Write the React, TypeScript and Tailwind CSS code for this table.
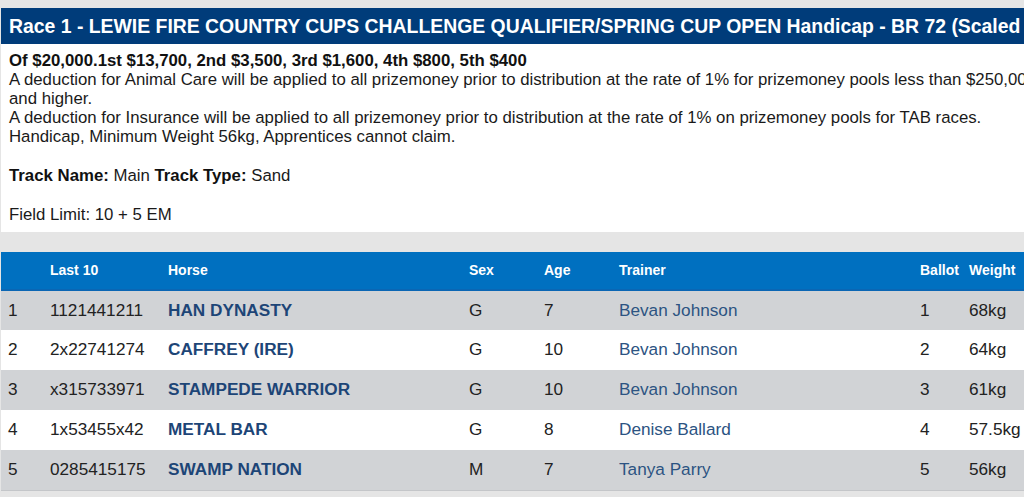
const runners = [
  { no: 1, last10: '1121441211', horse: 'HAN DYNASTY', sex: 'G', age: 7, trainer: 'Bevan Johnson', ballot: 1, weight: '68kg' },
  { no: 2, last10: '2x22741274', horse: 'CAFFREY (IRE)', sex: 'G', age: 10, trainer: 'Bevan Johnson', ballot: 2, weight: '64kg' },
  { no: 3, last10: 'x315733971', horse: 'STAMPEDE WARRIOR', sex: 'G', age: 10, trainer: 'Bevan Johnson', ballot: 3, weight: '61kg' },
  { no: 4, last10: '1x53455x42', horse: 'METAL BAR', sex: 'G', age: 8, trainer: 'Denise Ballard', ballot: 4, weight: '57.5kg' },
  { no: 5, last10: '0285415175', horse: 'SWAMP NATION', sex: 'M', age: 7, trainer: 'Tanya Parry', ballot: 5, weight: '56kg' },
];

export default function App() {
  return (
    <div className="w-[1024px] h-[497px] overflow-hidden bg-[#e5e5e5] pt-2 pl-px font-['Liberation_Sans',Arial,sans-serif]">
      {/* Race title */}
      <div className="h-9 bg-[#003c7a] text-white font-bold text-[19.4px] leading-9 pl-2 whitespace-nowrap overflow-hidden">
        Race 1 - LEWIE FIRE COUNTRY CUPS CHALLENGE QUALIFIER/SPRING CUP OPEN Handicap - BR 72 (Scaled
      </div>

      {/* Conditions */}
      <div className="h-[188px] bg-white pl-2 pt-[7px] text-[16.8px] leading-[19px] text-[#1a1a1a] whitespace-nowrap overflow-hidden">
        <p className="font-bold text-[#111]">Of $20,000.1st $13,700, 2nd $3,500, 3rd $1,600, 4th $800, 5th $400</p>
        <p>A deduction for Animal Care will be applied to all prizemoney prior to distribution at the rate of 1% for prizemoney pools less than $250,00</p>
        <p>and higher.</p>
        <p>A deduction for Insurance will be applied to all prizemoney prior to distribution at the rate of 1% on prizemoney pools for TAB races.</p>
        <p>Handicap, Minimum Weight 56kg, Apprentices cannot claim.</p>
        <p className="mt-[20px]">
          <span className="font-bold text-[#111]">Track Name:</span> Main <span className="font-bold text-[#111]">Track Type:</span> Sand
        </p>
        <p className="mt-[20px]">Field Limit: 10 + 5 EM</p>
      </div>

      {/* Field table */}
      <table className="mt-5 w-[1040px] table-fixed border-collapse text-[17.2px]">
        <colgroup>
          <col className="w-[49px]" />
          <col className="w-[118px]" />
          <col className="w-[301px]" />
          <col className="w-[75px]" />
          <col className="w-[75px]" />
          <col className="w-[301px]" />
          <col className="w-[49px]" />
          <col />
        </colgroup>
        <thead>
          <tr className="h-[38px] bg-[#0070c0] text-white text-[14px] font-bold text-left border-b-2 border-[#0a66b4]">
            <th className="pl-2"></th>
            <th>Last 10</th>
            <th>Horse</th>
            <th>Sex</th>
            <th>Age</th>
            <th>Trainer</th>
            <th>Ballot</th>
            <th>Weight</th>
          </tr>
        </thead>
        <tbody>
          {runners.map((r, i) => (
            <tr key={r.no} className={`h-10 ${i % 2 === 0 ? 'bg-[#d1d3d6]' : 'bg-white'} text-[#222]`}>
              <td className="pl-[7px]">{r.no}</td>
              <td>{r.last10}</td>
              <td className="font-bold text-[#1d4577]">{r.horse}</td>
              <td>{r.sex}</td>
              <td>{r.age}</td>
              <td className="text-[#2c5382]">{r.trainer}</td>
              <td>{r.ballot}</td>
              <td>{r.weight}</td>
            </tr>
          ))}
        </tbody>
      </table>
      <div className="h-px bg-[#c4c6c9]" />
    </div>
  );
}
